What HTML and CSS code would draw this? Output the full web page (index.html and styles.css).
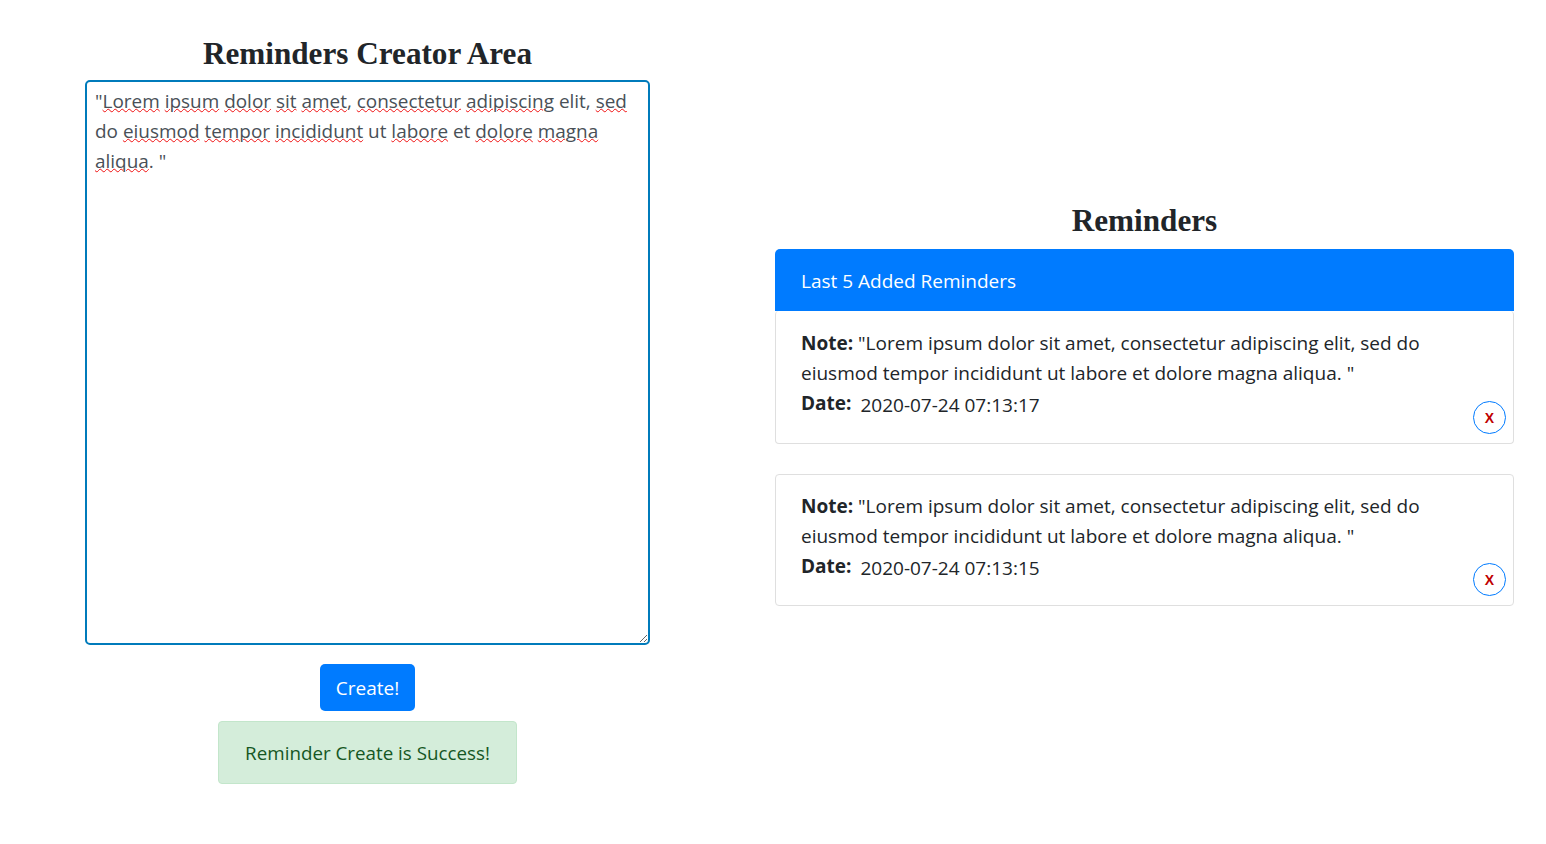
FILE: index.html
```html
<!DOCTYPE html>
<html lang="en">
<head>
  <meta charset="UTF-8">
  <meta name="viewport" content="width=device-width, initial-scale=1.0">
  <link rel="stylesheet" href="styles.css">
  <title>Reminders</title>
</head>
<body>

<div class="row">
  <div class="creator">
    <h2>Reminders Creator Area</h2>
    <div class="note-input">"<span class="typo">Lorem</span> <span class="typo">ipsum</span> <span class="typo">dolor</span> <span class="typo">sit</span> <span class="typo">amet</span>, <span class="typo">consectetur</span> <span class="typo">adipiscing</span> elit, <span class="typo">sed</span><br>do <span class="typo">eiusmod</span> <span class="typo">tempor</span> <span class="typo">incididunt</span> ut <span class="typo">labore</span> et <span class="typo">dolore</span> <span class="typo">magna</span><br><span class="typo">aliqua</span>. "</div>
    <button class="btn-create">Create!</button>
    <div class="alert-success">Reminder Create is Success!</div>
  </div>

  <div class="reminders">
    <h2>Reminders</h2>
    <div class="list-header">Last 5 Added Reminders</div>
    <div class="reminder first">
      <p class="note"><b>Note:</b> "Lorem ipsum dolor sit amet, consectetur adipiscing elit, sed do<br>eiusmod tempor incididunt ut labore et dolore magna aliqua. "</p>
      <div class="date"><b>Date:</b><span>2020-07-24 07:13:17</span></div>
      <button class="btn-delete">X</button>
    </div>
    <div class="reminder">
      <p class="note"><b>Note:</b> "Lorem ipsum dolor sit amet, consectetur adipiscing elit, sed do<br>eiusmod tempor incididunt ut labore et dolore magna aliqua. "</p>
      <div class="date"><b>Date:</b><span>2020-07-24 07:13:15</span></div>
      <button class="btn-delete">X</button>
    </div>
  </div>
</div>

</body>
</html>
```

FILE: styles.css
```css
body {
  margin: 0;
  background-color: #fff;
  color: #212529;
  font-family: "Open Sans", "Noto Sans", sans-serif;
  font-size: 19px;
  line-height: 30px;
}

h2 {
  margin: 0 0 7px;
  padding-top: 1px;
  font-family: "Liberation Serif", serif;
  font-size: 31.2px;
  font-weight: bold;
  line-height: 38px;
  text-align: center;
}

.row {
  display: flex;
  align-items: center;
  height: 818px;
}

.creator {
  width: 735px;
  display: flex;
  flex-direction: column;
  align-items: center;
}

.note-input {
  box-sizing: border-box;
  width: 565px;
  height: 565px;
  padding: 4px 8px;
  border: 2px solid #007bbb;
  border-radius: 5px;
  color: #495057;
  font-size: 18.95px;
  overflow: auto;
  resize: both;
}

.typo {
  text-decoration: underline wavy #f01010 1px;
  text-underline-offset: 0;
}

.btn-create {
  margin-top: 19px;
  width: 95px;
  height: 47px;
  background-color: #007bff;
  color: #fff;
  border: none;
  border-radius: 5px;
  font: inherit;
}

.alert-success {
  box-sizing: border-box;
  margin-top: 10px;
  width: 299px;
  height: 63px;
  background-color: #d4edda;
  border: 1px solid #c3e6cb;
  border-radius: 4px;
  color: #155724;
  font-size: 18.8px;
  line-height: 62px;
  text-align: center;
}

.reminders {
  margin-left: 40px;
  width: 739px;
  padding-bottom: 12px;
}

.reminders h2 {
  margin-bottom: 9px;
}

.list-header {
  height: 62px;
  padding-left: 26px;
  background-color: #007bff;
  border-radius: 5px 5px 0 0;
  color: #fff;
  line-height: 64px;
}

.reminder {
  position: relative;
  box-sizing: border-box;
  height: 132px;
  margin-top: 30px;
  padding: 16px 25px;
  border: 1px solid #dfdfdf;
  border-radius: 4px;
}

.reminder.first {
  height: 133px;
  margin-top: 0;
  padding-top: 17px;
  border-top: none;
}

.note {
  margin: 0;
}

.date {
  display: flex;
  gap: 9px;
}

.date span {
  margin-top: 2px;
}

.btn-delete {
  position: absolute;
  right: 7px;
  bottom: 9px;
  width: 33px;
  height: 33px;
  padding: 2px 0 0;
  background-color: #fff;
  border: 1px solid #007bff;
  border-radius: 50%;
  color: #c00000;
  font-family: "Liberation Sans", sans-serif;
  font-size: 14px;
  font-weight: bold;
}
```
